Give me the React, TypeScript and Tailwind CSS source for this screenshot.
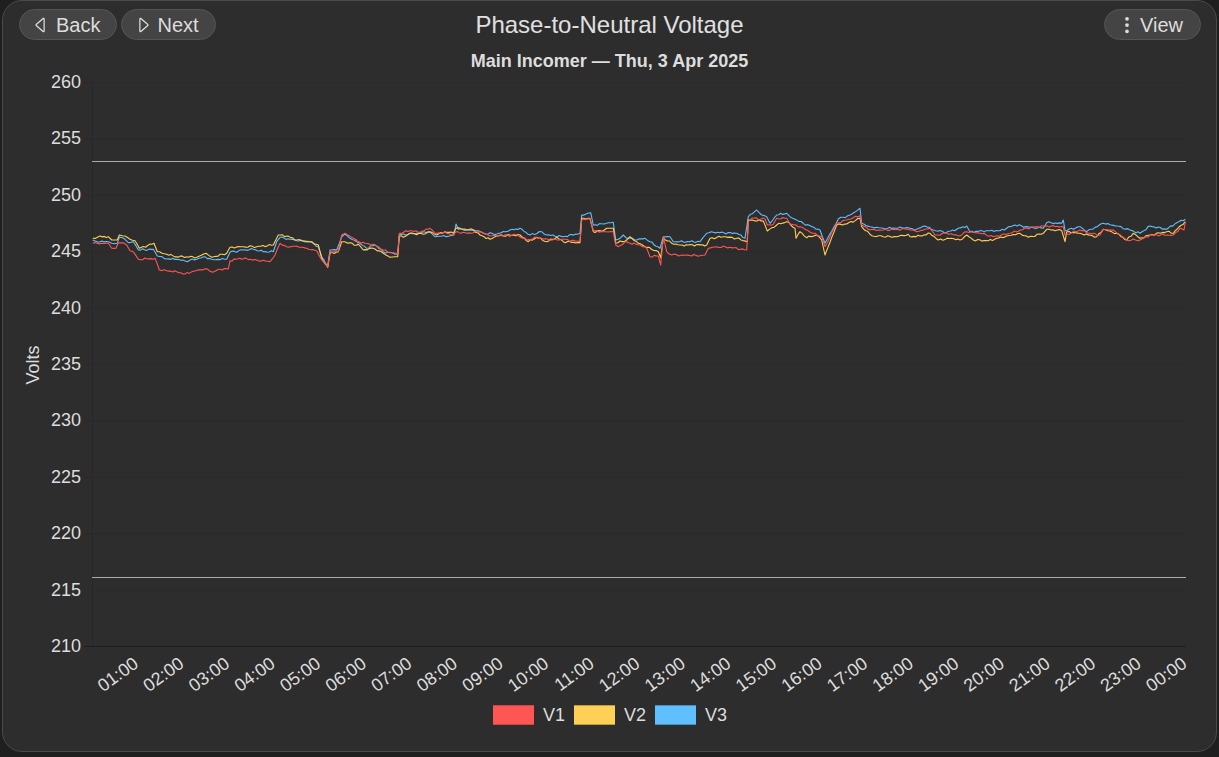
import { BsCaretLeft, BsCaretRight, BsThreeDotsVertical } from "react-icons/bs";

const PLOT = { left: 92, right: 1186, top: 82, bottom: 646 };

const yTicks = [260, 255, 250, 245, 240, 235, 230, 225, 220, 215, 210];
const xLabels = [
  "01:00", "02:00", "03:00", "04:00", "05:00", "06:00", "07:00", "08:00",
  "09:00", "10:00", "11:00", "12:00", "13:00", "14:00", "15:00", "16:00",
  "17:00", "18:00", "19:00", "20:00", "21:00", "22:00", "23:00", "00:00",
];

const yFor = (v: number) => PLOT.top + ((260 - v) / 50) * (PLOT.bottom - PLOT.top);

// traced from zoomed crops: [offsetX, offsetY, x,y, x,y, ...], at 3x scale
const redTrace = [
  [80, 200, 38,130, 85,130, 95,145, 108,145, 115,128, 130,128, 140,135, 150,152, 160,155, 175,178, 225,175, 238,210, 260,212, 290,215, 315,222, 340,214, 375,206, 398,217, 415,208, 445,207, 450,182, 480,175, 530,180, 570,185, 585,165, 600,130, 620,140, 650,138, 680,145, 710,152, 725,180, 743,200, 750,155, 775,155, 785,105, 795,100, 830,120],
  [350, 200, 15,122, 45,130, 75,135, 100,150, 120,158, 143,162, 148,100, 180,92, 210,97, 240,85, 255,100, 285,97, 310,105, 318,95, 350,100, 390,95, 420,108, 460,107, 500,105, 530,120, 560,113, 600,120, 640,118, 690,125, 695,60, 720,57, 730,92, 760,95, 790,95, 797,135, 805,140, 830,125],
  [630, 195, 0,145, 30,150, 50,160, 60,185, 85,183, 92,210, 100,125, 110,170, 125,180, 160,180, 210,182, 225,180, 235,160, 260,155, 300,157, 350,165, 355,80, 365,70, 405,72, 412,90, 430,88, 440,70, 470,70, 480,87, 510,95, 550,115, 575,125, 585,155, 620,85, 650,75, 690,62, 695,90, 720,105, 760,105, 835,102],
  [910, 200, 0,90, 20,95, 60,85, 75,105, 110,100, 150,108, 170,95, 210,100, 250,110, 300,100, 350,85, 400,78, 460,80, 465,105, 510,90, 540,100, 570,105, 580,88, 610,90, 650,120, 690,120, 720,105, 790,105, 810,85, 822,90, 826,66],
];
const blueTrace = [
  [80, 200, 38,120, 60,125, 85,125, 95,130, 112,130, 118,112, 135,118, 145,128, 160,125, 175,150, 220,148, 232,168, 260,177, 290,178, 315,183, 350,178, 375,170, 395,178, 440,178, 450,157, 490,150, 520,148, 550,155, 580,155, 590,125, 600,112, 630,118, 650,122, 690,125, 715,140, 725,170, 743,198, 750,150, 770,150, 785,110, 795,102, 810,115, 830,125],
  [350, 200, 30,130, 50,145, 75,135, 100,155, 120,157, 143,162, 148,105, 200,100, 235,95, 255,110, 300,107, 312,105, 318,72, 325,88, 350,90, 385,92, 400,100, 440,102, 480,90, 510,85, 540,105, 575,95, 590,105, 640,110, 690,100, 695,45, 722,38, 730,75, 760,72, 790,67, 797,120, 810,115, 820,105, 830,115],
  [630, 195, 0,130, 20,135, 45,130, 60,140, 90,160, 100,125, 120,125, 130,140, 210,140, 230,115, 250,112, 320,115, 345,130, 355,65, 380,45, 395,60, 410,65, 420,85, 440,60, 470,55, 480,65, 520,85, 570,105, 585,145, 625,72, 660,60, 690,40, 695,85, 720,95, 760,100, 835,98],
  [910, 200, 0,85, 20,88, 45,78, 70,90, 110,97, 170,78, 180,95, 240,92, 270,92, 315,75, 360,82, 400,85, 410,68, 455,70, 460,60, 465,92, 510,80, 530,95, 580,70, 620,78, 660,90, 690,100, 720,78, 770,88, 800,68, 826,58],
];
const yellowTrace = [
  [80, 200, 38,115, 55,110, 85,110, 95,120, 112,120, 118,105, 135,108, 150,118, 165,122, 178,145, 222,130, 232,155, 260,163, 290,170, 320,170, 350,172, 378,160, 395,172, 440,160, 450,142, 490,140, 530,140, 580,135, 595,105, 620,108, 650,120, 690,125, 715,135, 725,175, 743,202, 750,160, 775,155, 785,125, 795,125, 830,136],
  [350, 200, 25,132, 40,150, 70,145, 100,160, 120,172, 143,170, 148,108, 160,112, 180,100, 220,103, 240,95, 260,105, 285,95, 310,100, 318,85, 370,90, 390,105, 420,118, 440,108, 480,105, 510,105, 535,125, 560,112, 590,125, 620,112, 640,125, 690,128, 695,55, 720,55, 730,95, 760,92, 770,85, 790,85, 797,130, 830,120],
  [630, 195, 0,125, 25,145, 45,155, 85,170, 92,188, 100,130, 125,145, 150,150, 230,150, 240,130, 280,125, 320,130, 352,140, 355,75, 400,78, 412,108, 440,90, 470,80, 495,100, 498,130, 510,110, 530,128, 560,120, 575,135, 585,180, 620,90, 650,87, 690,70, 695,95, 725,122, 760,125, 800,125, 835,118],
  [910, 200, 0,110, 30,108, 60,100, 85,120, 125,115, 150,120, 170,105, 190,120, 235,122, 290,108, 330,100, 355,112, 400,100, 410,88, 455,92, 465,125, 470,95, 510,100, 560,110, 580,88, 620,100, 650,120, 670,100, 690,115, 720,105, 770,95, 790,100, 808,80, 826,65],
];

// turn traces into a polyline, with small repeatable noise between the traced points
function buildLine(trace: number[][], seed: number) {
  const pts: [number, number][] = [];
  trace.forEach((t) => {
    for (let i = 2; i < t.length; i += 2) {
      pts.push([t[0] + t[i] / 3, t[1] + t[i + 1] / 3]);
    }
  });
  const out: string[] = [];
  for (let i = 0; i < pts.length; i++) {
    out.push(`${pts[i][0].toFixed(1)},${pts[i][1].toFixed(1)}`);
    if (i === pts.length - 1) break;
    const [x0, y0] = pts[i];
    const [x1, y1] = pts[i + 1];
    const steps = Math.floor((x1 - x0) / 2);
    for (let s = 1; s < steps; s++) {
      const f = s / steps;
      const x = x0 + (x1 - x0) * f;
      const n = Math.sin(x * 1.9 + seed) * 0.55 + Math.sin(x * 0.63 + seed * 2.3) * 0.5;
      out.push(`${x.toFixed(1)},${(y0 + (y1 - y0) * f + n).toFixed(1)}`);
    }
  }
  return out.join(" ");
}

const series = [
  { name: "V3", color: "#5fbfff", points: buildLine(blueTrace, 4.1) },
  { name: "V2", color: "#ffd055", points: buildLine(yellowTrace, 1.7) },
  { name: "V1", color: "#ff5555", points: buildLine(redTrace, 0.3) },
];

const legend = [
  { name: "V1", className: "bg-[#ff5555] border-[#c74a4a]" },
  { name: "V2", className: "bg-[#ffd055] border-[#bd9c48]" },
  { name: "V3", className: "bg-[#5fbfff] border-[#4c90bd]" },
];

function PillButton({ children }: { children: React.ReactNode }) {
  return (
    <button className="h-[31px] flex items-center rounded-full bg-[#444444] border border-[#555555] text-[#dddddd] text-[20px] leading-none">
      {children}
    </button>
  );
}

export default function App() {
  return (
    <div className="h-[757px] w-[1219px] overflow-hidden bg-[#1f1f1f] font-['Liberation_Sans',Arial,sans-serif]">
      <div className="mx-[2px] h-[752px] rounded-[20px] border border-[#4a4a4a] bg-[#2d2d2d] overflow-hidden">
        {/* Header */}
        <div className="grid grid-cols-[1fr_auto_1fr] items-center px-4 pt-2">
          <div className="flex gap-1">
            <PillButton>
              <span className="flex items-center gap-[5px] pl-[11px] pr-4">
                <BsCaretLeft className="w-5 h-5" />
                Back
              </span>
            </PillButton>
            <PillButton>
              <span className="flex items-center gap-[4px] pl-[11px] pr-4">
                <BsCaretRight className="w-5 h-5" />
                Next
              </span>
            </PillButton>
          </div>
          <h1 className="text-[24px] leading-none font-normal text-[#e0e0e0]">
            Phase-to-Neutral Voltage
          </h1>
          <div className="flex justify-end -mr-px">
            <PillButton>
              <span className="flex items-center gap-[3px] pl-[12px] pr-[17px]">
                <BsThreeDotsVertical className="w-5 h-5" />
                View
              </span>
            </PillButton>
          </div>
        </div>
        <div className="mt-[11px] text-center text-[18px] leading-5 font-bold text-[#dddddd]">
          Main Incomer — Thu, 3 Apr 2025
        </div>

        {/* Chart, viewBox is in page pixels */}
        <svg
          className="block"
          width={1215}
          height={632}
          viewBox="3 71 1215 632"
          fontFamily="'Liberation Sans', Arial, sans-serif"
        >
          {yTicks.map((v) => (
            <g key={v}>
              <line
                x1={84}
                x2={PLOT.right}
                y1={yFor(v) + 0.5}
                y2={yFor(v) + 0.5}
                stroke={v === 210 ? "#1f1f1f" : "#2a2a2a"}
              />
              <text x={81} y={yFor(v) + 6} textAnchor="end" fontSize={18} fill="#dddddd">
                {v}
              </text>
            </g>
          ))}
          <line x1={92.5} x2={92.5} y1={PLOT.top} y2={PLOT.bottom} stroke="#272727" />
          <text
            transform="translate(39 365) rotate(-90)"
            textAnchor="middle"
            fontSize={18}
            fill="#dddddd"
          >
            Volts
          </text>

          {/* limit lines */}
          <line x1={PLOT.left} x2={PLOT.right} y1={161.5} y2={161.5} stroke="#aaaaaa" />
          <line x1={PLOT.left} x2={PLOT.right} y1={577.5} y2={577.5} stroke="#aaaaaa" />

          {series.map((s) => (
            <polyline
              key={s.name}
              points={s.points}
              fill="none"
              stroke={s.color}
              strokeWidth={1.1}
              strokeLinejoin="round"
            />
          ))}

          {xLabels.map((label, i) => {
            const x = PLOT.left + ((i + 1) * (PLOT.right - PLOT.left)) / 24;
            return (
              <text
                key={label}
                transform={`translate(${x + 2} 666) rotate(-36)`}
                textAnchor="end"
                fontSize={18}
                fill="#dddddd"
              >
                {label}
              </text>
            );
          })}
        </svg>

        {/* Legend */}
        <div className="mt-[2px] pl-px flex justify-center gap-[9px] text-[18px] leading-5 text-[#dddddd]">
          {legend.map((item) => (
            <div key={item.name} className="flex items-center gap-[9px]">
              <span className={`w-[41px] h-5 border-y ${item.className}`} />
              <span className="w-[22px]">{item.name}</span>
            </div>
          ))}
        </div>
      </div>
    </div>
  );
}
